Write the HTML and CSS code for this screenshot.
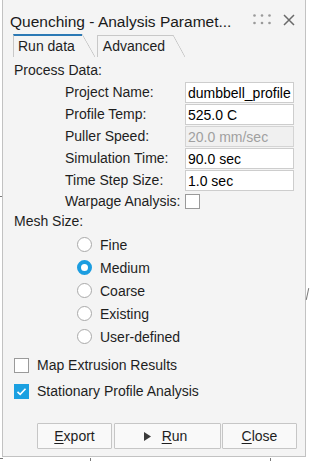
FILE: index.html
```html
<!DOCTYPE html>
<html lang="en">
  <head>
    <meta charset="UTF-8" />
    <meta name="viewport" content="width=device-width, initial-scale=1.0" />
    <title>Quenching - Analysis Parameters</title>
    <link rel="stylesheet" href="styles.css">
  </head>
  <body>
    <div class="dialog">
      <div class="titlebar">
        <span class="title">Quenching - Analysis Paramet...</span>
        <svg class="grip" width="18" height="12" viewBox="0 0 18 12">
          <circle cx="1.5" cy="1.5" r="1.3" />
          <circle cx="9" cy="1.5" r="1.3" />
          <circle cx="16.5" cy="1.5" r="1.3" />
          <circle cx="1.5" cy="9" r="1.3" />
          <circle cx="9" cy="9" r="1.3" />
          <circle cx="16.5" cy="9" r="1.3" />
        </svg>
        <svg class="close-x" width="12" height="12" viewBox="0 0 12 12">
          <path d="M1 1 L11 11 M11 1 L1 11" />
        </svg>
      </div>

      <div class="tabs">
        <div class="tab active">Run data</div>
        <div class="tab">Advanced</div>
      </div>

      <div class="pane">
        <div class="section">Process Data:</div>
        <div class="form">
          <label>Project Name:</label>
          <input type="text" value="dumbbell_profile" />
          <label>Profile Temp:</label>
          <input type="text" value="525.0 C" />
          <label>Puller Speed:</label>
          <input type="text" value="20.0 mm/sec" disabled />
          <label>Simulation Time:</label>
          <input type="text" value="90.0 sec" />
          <label>Time Step Size:</label>
          <input type="text" value="1.0 sec" />
          <label>Warpage Analysis:</label>
          <span class="box"></span>
        </div>

        <div class="section mesh">Mesh Size:</div>
        <div class="radios">
          <div class="option"><span class="radio"></span>Fine</div>
          <div class="option"><span class="radio checked"></span>Medium</div>
          <div class="option"><span class="radio"></span>Coarse</div>
          <div class="option"><span class="radio"></span>Existing</div>
          <div class="option"><span class="radio"></span>User-defined</div>
        </div>

        <div class="checks">
          <div class="option"><span class="box"></span>Map Extrusion Results</div>
          <div class="option">
            <span class="box checked">
              <svg width="15" height="15" viewBox="0 0 15 15">
                <path d="M3.5 7.8 L6.2 10.4 L11.5 4.8" />
              </svg>
            </span>
            Stationary Profile Analysis
          </div>
        </div>

        <div class="buttons">
          <button class="btn export"><u>E</u>xport</button>
          <button class="btn run">
            <svg width="7" height="9" viewBox="0 0 7 9"><polygon points="0,0 7,4.5 0,9" /></svg>
            <span><u>R</u>un</span>
          </button>
          <button class="btn close"><u>C</u>lose</button>
        </div>
      </div>
    </div>

    <div class="mark mark-a"></div>
    <div class="mark mark-b"></div>
    <div class="mark mark-c"></div>
    <div class="mark mark-d"></div>
    <div class="mark mark-e"></div>
  </body>
</html>
```

FILE: styles.css
```css
body {
  margin: 0;
  width: 312px;
  height: 461px;
  overflow: hidden;
  position: relative;
  background: #ffffff;
  font-family: "Liberation Sans", Arial, sans-serif;
  font-size: 14px;
  color: #1e1e1e;
}
.dialog {
  box-sizing: border-box;
  margin-left: 2px;
  width: 304px;
  height: 457px;
  background: #f4f4f4;
  border: 1px solid #c2c2c2;
  border-top: none;
}
.titlebar {
  display: flex;
  align-items: flex-start;
  height: 34px;
  box-sizing: border-box;
  padding: 12px 10px 0 7px;
}
.title {
  font-size: 15.5px;
  line-height: 20px;
  color: #1a1a1a;
  white-space: nowrap;
}
.grip {
  margin: 2px 0 0 auto;
  fill: #9a9a9a;
}
.close-x {
  margin: 2px 0 0 12px;
  fill: none;
  stroke: #6a6a6a;
  stroke-width: 1.5;
}
.tabs {
  display: flex;
  align-items: flex-end;
  height: 23px;
  padding-left: 10px;
}
.tab {
  position: relative;
  line-height: 21px;
  border-left: 1px solid #c8c8c8;
  border-top: 1px solid #c8c8c8;
  padding: 0 8px 0 5px;
  margin-right: 15px;
}
.tab::after {
  content: "";
  position: absolute;
  left: 100%;
  top: -1px;
  bottom: 0;
  width: 12px;
  background: linear-gradient(to top right, transparent calc(50% - 0.7px), #c4c4c4 50%, transparent calc(50% + 0.7px));
}
.tab.active {
  border-top: 2px solid #2b79b5;
  padding: 0 7px 0 4px;
}
.tab.active::after {
  top: -2px;
  width: 13px;
}
.pane {
  padding-left: 11px;
}
.section {
  line-height: 18px;
}
.pane > .section:first-child {
  margin-top: 4px;
}
.section.mesh {
  margin-top: 2px;
}
.form {
  display: grid;
  grid-template-columns: 120px 109px;
  grid-template-rows: repeat(5, 21px) 18px;
  row-gap: 1px;
  margin: 3px 0 0 51px;
  align-items: center;
}
.form label {
  line-height: 21px;
  white-space: nowrap;
}
.form input {
  box-sizing: border-box;
  width: 109px;
  height: 21px;
  margin: 0;
  padding: 0 2px;
  border: 1px solid #cdcdcd;
  border-radius: 0;
  background: #ffffff;
  font: inherit;
  color: #000000;
}
.form input:disabled {
  background: #f0f0f0;
  border-color: #d4d4d4;
  color: #a0a0a0;
}
.box {
  box-sizing: border-box;
  display: inline-block;
  width: 15px;
  height: 15px;
  border: 1px solid #9a9a9a;
  background: #ffffff;
  flex: none;
}
.box.checked {
  border: none;
  background: #1ba0e1;
}
.box svg {
  display: block;
  fill: none;
  stroke: #ffffff;
  stroke-width: 1.6;
}
.radios {
  margin: 3px 0 0 63px;
}
.option {
  display: flex;
  align-items: center;
  gap: 8px;
  height: 23px;
}
.radio {
  box-sizing: border-box;
  width: 15px;
  height: 15px;
  border-radius: 50%;
  border: 1px solid #a9a9a9;
  background: #ffffff;
  flex: none;
}
.radio.checked {
  border: 4.5px solid #1c9de0;
}
.checks {
  margin-top: 4px;
}
.checks .option {
  height: 26px;
}
.buttons {
  display: flex;
  margin: 19px 0 0 23px;
}
.btn {
  box-sizing: border-box;
  height: 26px;
  margin: 0;
  padding: 0;
  border: 1px solid #c6c6c6;
  border-radius: 1px;
  background: #f9f9f9;
  font: inherit;
  color: #1e1e1e;
}
.btn u {
  text-decoration-thickness: 1px;
  text-underline-offset: 2px;
}
.export {
  width: 75px;
}
.run {
  width: 107px;
  margin-left: 2px;
  display: flex;
  align-items: center;
  justify-content: center;
  gap: 11px;
  padding-right: 4px;
}
.run svg {
  fill: #3a3a3a;
}
.close {
  width: 75px;
  margin-left: 1px;
}
.mark {
  position: absolute;
  background: #7a7a7a;
}
.mark-a {
  left: 90px;
  top: 458px;
  width: 1px;
  height: 3px;
}
.mark-b {
  left: 270px;
  top: 458px;
  width: 1px;
  height: 3px;
}
.mark-c {
  left: 0;
  top: 458px;
  width: 3px;
  height: 1px;
}
.mark-d {
  left: 0;
  top: 196px;
  width: 2px;
  height: 1px;
}
.mark-e {
  left: 307px;
  top: 288px;
  width: 1px;
  height: 12px;
  transform: rotate(12deg);
}
```
